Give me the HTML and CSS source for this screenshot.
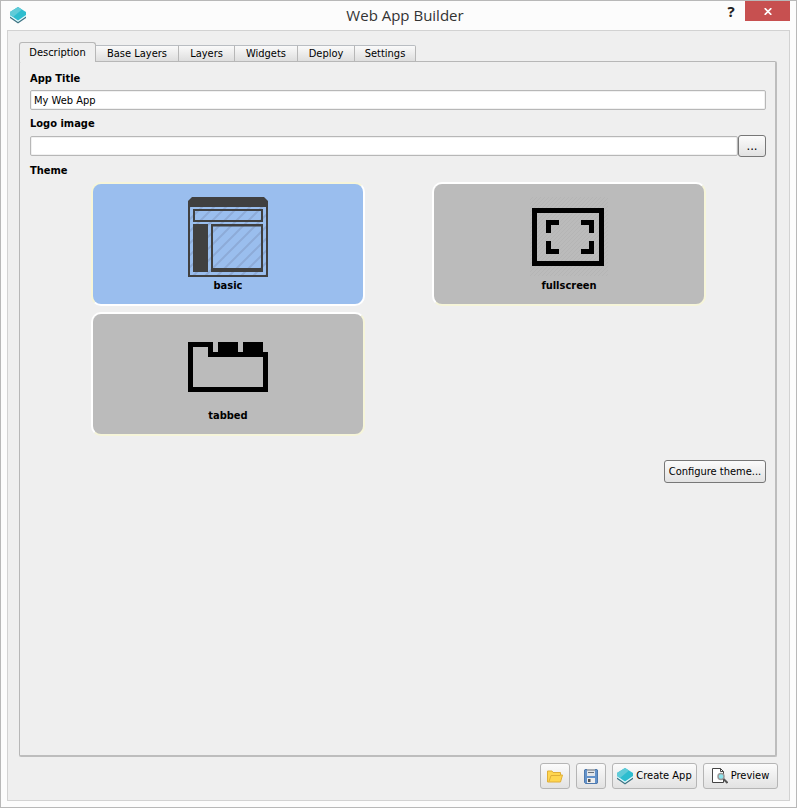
FILE: index.html
```html
<!DOCTYPE html>
<html lang="en">
<head>
<meta charset="utf-8">
<title>Web App Builder</title>
<link rel="stylesheet" href="styles.css">
</head>
<body>
<div class="window">
  <header class="titlebar">
    <svg class="layers-icon" width="16" height="17" viewBox="0 0 16 17"><path d="M0 8l8 4.500 8-4.500v3l-8 5.500-8-5.500z" fill="#3c7383"/><path d="M0 7l8 4.500L16 7v2.500L8 15 0 9.500z" fill="#e4fbfe"/><path d="M8 0l8 5v3l-8 5.500L0 8V5z" fill="#2ebdcf"/><path d="M8 0L0 5v3l3 2 9-7.500z" fill="#60cbd8"/></svg>
    <h1 class="window-title"><span>Web App Builder</span></h1>
    <span class="help">?</span>
    <button class="close" aria-label="Close"><svg width="8" height="7" viewBox="0 0 8 7"><path d="M.7.2l6.600 6.600M7.300.2L.7 6.800" stroke="#fff" stroke-width="1.700"/></svg></button>
  </header>
  <main class="dialog">
    <nav class="tabs">
      <span class="tab active"><span class="t-desc">Description</span></span>
      <span class="tab w-base"><span>Base Layers</span></span>
      <span class="tab w-layers"><span>Layers</span></span>
      <span class="tab w-widgets"><span>Widgets</span></span>
      <span class="tab w-deploy"><span>Deploy</span></span>
      <span class="tab w-settings"><span>Settings</span></span>
    </nav>
    <section class="pane">
      <label class="label">App Title</label>
      <div class="field">My Web App</div>
      <label class="label logo-label">Logo image</label>
      <div class="logo-row"><div class="field grow"></div><button class="btn dark browse">...</button></div>
      <label class="label theme-label">Theme</label>
      <div class="themes">
        <div class="card selected">
          <svg width="80" height="80" viewBox="0 0 80 80">
            <defs><pattern id="hatch" width="12" height="12" patternUnits="userSpaceOnUse"><path d="M-3 3L3-3M0 12L12 0M9 15l6-6" stroke="#8dabd8" stroke-width="2"/></pattern></defs>
            <rect x="2" y="8" width="76" height="70" fill="url(#hatch)"/>
            <path d="M0 10V4l4-4h72l4 4v6z" fill="#404040"/>
            <path d="M1 9v70h78V9M6 13h68v11H6zM24 28h50v44H24z" fill="none" stroke="#404040" stroke-width="2"/>
            <path d="M5 27h15v48H5z" fill="#404040"/>
            <path d="M24 28.500h50V74H24z" fill="none" stroke="#404040" stroke-width="2"/>
          </svg>
          <span class="name">basic</span>
        </div>
        <div class="card">
          <svg width="80" height="80" viewBox="0 0 80 80">
            <defs><pattern id="fine" width="4" height="4" patternUnits="userSpaceOnUse"><path d="M0 4L4 0" stroke="#b5b5b5" stroke-width="1"/></pattern></defs>
            <rect x="1" y="0" width="78" height="79" fill="url(#fine)"/>
            <path d="M5.500 13.500h67v53h-67z" fill="none" stroke="#000" stroke-width="5"/>
            <path d="M19.500 36V25.500H30M52 25.500h10.500V36M19.500 44v10.500H30M52 54.500h10.500V44" fill="none" stroke="#000" stroke-width="5"/>
          </svg>
          <span class="name">fullscreen</span>
        </div>
        <div class="card">
          <svg width="80" height="80" viewBox="0 0 80 80"><path d="M0 15h25v10h5V15h20v10h5V15h20v10h5v40H0zM5 20v40h70V30H20V20z" fill="#000" fill-rule="evenodd"/></svg>
          <span class="name">tabbed</span>
        </div>
      </div>
      <button class="btn dark configure"><span>Configure theme...</span></button>
    </section>
    <footer class="actions">
      <button class="btn icon" aria-label="Open"><svg width="16" height="13" viewBox="0 0 16 13"><path d="M.5 12V1h4.500l1 1.500h7.500V5h2L13.500 12z" fill="#ffd64f" stroke="#dfae38"/><path d="M2 11.500L4 5.500h9.500" fill="none" stroke="#dfae38"/></svg></button>
      <button class="btn icon" aria-label="Save"><svg width="14" height="15" viewBox="0 0 14 15"><path d="M1 .5h12l.5.5v13l-.5.5H1.500l-1-1V1z" fill="#6392ca" stroke="#4e79ad"/><path d="M3 0h8v7H3z" fill="#e1e5ea"/><path d="M3 1h8M4 3.500h6" stroke="#687078"/><path d="M3 9h8v5H3z" fill="#eee"/><path d="M4 10h2.500v3H4z" fill="#555"/></svg></button>
      <button class="btn create"><svg width="16" height="17" viewBox="0 0 16 17"><path d="M0 8l8 4.500 8-4.500v3l-8 5.500-8-5.500z" fill="#3c7383"/><path d="M0 7l8 4.500L16 7v2.500L8 15 0 9.500z" fill="#e4fbfe"/><path d="M8 0l8 5v3l-8 5.500L0 8V5z" fill="#2ebdcf"/><path d="M8 0L0 5v3l3 2 9-7.500z" fill="#60cbd8"/></svg><span>Create App</span></button>
      <button class="btn preview"><svg width="16" height="16" viewBox="0 0 16 16"><path d="M.5.5h8l3 3v11H.5z" fill="#fff" stroke="#444"/><path d="M8.500.5v3h3" fill="none" stroke="#444"/><circle cx="9" cy="8.500" r="3" fill="#8ce3ec" stroke="#999" stroke-width="1.500"/><path d="M11.500 11l4 4" stroke="#555" stroke-width="2"/></svg><span>Preview</span></button>
    </footer>
  </main>
</div>
</body>
</html>
```
FILE: styles.css
```css
* { box-sizing: border-box; }
body { margin: 0; font: 11px/14px "DejaVu Sans Condensed", "DejaVu Sans", sans-serif; font-stretch: condensed; color: #000; }
.window { width: 797px; height: 808px; border: 1px solid #b8b8b8; background: #fcfcfc; padding: 0 6px 6px; display: flex; flex-direction: column; overflow: hidden; }
.titlebar { height: 29px; flex: none; display: flex; align-items: flex-start; }
.layers-icon { margin: 6px 0 0 3px; }
.window-title { flex: 1; margin: 4px 0 0; padding-left: 58px; text-align: center; font: 15px/21px "Open Sans", sans-serif; color: #333; }
.help { font: bold 15px/20px "Noto Sans", sans-serif; color: #222; width: 10px; text-align: center; margin-right: 9px; }
.close { width: 45px; height: 20px; border: 0; padding: 0; background: #c75050; display: flex; align-items: center; justify-content: center; }
.dialog { flex: 1; border: 1px solid #d2d2d2; background: #efefef; padding: 11px 12px 11px 11px; display: flex; flex-direction: column; }
.tabs { display: flex; align-items: flex-end; height: 20px; margin-bottom: -1px; z-index: 1; }
.tab { height: 17px; border: 1px solid #b7b7b7; border-left: 0; border-top-color: #b9bdc2; background: linear-gradient(#fafafa, #dedede); display: flex; align-items: center; justify-content: center; padding-top: 1px; white-space: nowrap; }
.tab.active { width: 77px; height: 20px; border: 1px solid #b7b7b7; border-bottom: 0; border-radius: 3px 3px 0 0; background: #efefef; padding-bottom: 0; }
.w-base { width: 83px; }
.w-layers { width: 56px; }
.w-widgets { width: 63px; }
.w-deploy { width: 57px; }
.w-settings { width: 61px; border-top-right-radius: 2px; }
.pane { height: 696px; border: 1px solid #b7b7b7; border-right-width: 2px; border-bottom-width: 2px; border-right-color: #bdbdbd; border-bottom-color: #bdbdbd; border-radius: 2px; padding: 10px 9px 0 10px; display: flex; flex-direction: column; align-items: stretch; }
.label { font-weight: bold; height: 14px; margin-bottom: 4px; }
.logo-label { margin-top: 7px; }
.field { height: 20px; flex: none; border: 1px solid #b7b7b7; border-radius: 2px; background: #fff; padding: 3px 3px 0; box-shadow: inset 0 0 0 1px #f1f1f1; }
.logo-row { display: flex; align-items: center; height: 22px; }
.grow { flex: 1; }
.btn { font: inherit; color: #000; height: 26px; padding: 0; border: 1px solid #b5b5b5; border-radius: 3px; background: linear-gradient(#fbfbfb, #e2e2e2); display: flex; align-items: center; justify-content: center; white-space: nowrap; }
.dark { border-color: #777; }
.browse { width: 28px; height: 22px; font-size: 13px; }
.theme-label { margin-top: 7px; }
.themes { display: grid; grid-template-columns: 274px 274px; column-gap: 67px; row-gap: 6px; margin-left: 61px; }
.card { height: 124px; border: 2px solid; border-color: #fff #f6f5d9 #f6f5d9 #fff; border-radius: 10px; background: #bbb; display: flex; flex-direction: column; align-items: center; padding-top: 13px; }
.selected { background: #9abeee; border-color: #f6f5d9 #fff #fff #f6f5d9; }
.name { font-weight: bold; margin-top: 2px; }
.configure { width: 102px; height: 23px; margin: 24px 0 0; align-self: flex-end; }
.actions { display: flex; justify-content: flex-end; gap: 6px; margin-top: 6px; margin-right: -1px; }
.icon { width: 30px; }
.create { width: 85px; gap: 3px; }
.preview { width: 75px; gap: 3px; }
```
